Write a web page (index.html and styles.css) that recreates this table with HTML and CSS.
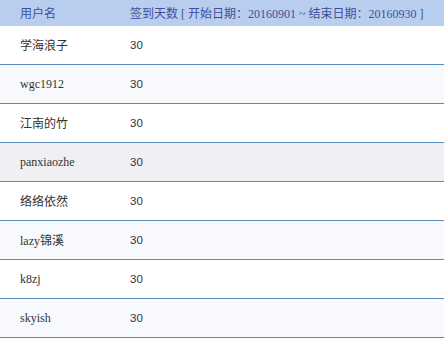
FILE: index.html
```html
<!DOCTYPE html>
<html lang="zh">
<head>
<meta charset="utf-8">
<link rel="stylesheet" href="styles.css">
</head>
<body>
<table class="sign">
  <thead>
    <tr><th class="c-name">用户名</th><th class="c-days">签到天数 [ 开始日期：20160901 ~ 结束日期：20160930 ]</th></tr>
  </thead>
  <tbody>
    <tr><td class="c-name">学海浪子</td><td class="c-days num">30</td></tr>
    <tr class="alt"><td class="c-name">wgc1912</td><td class="c-days num">30</td></tr>
    <tr><td class="c-name">江南的竹</td><td class="c-days num">30</td></tr>
    <tr class="hover"><td class="c-name">panxiaozhe</td><td class="c-days num">30</td></tr>
    <tr><td class="c-name">络络依然</td><td class="c-days num">30</td></tr>
    <tr class="alt"><td class="c-name">lazy锦溪</td><td class="c-days num">30</td></tr>
    <tr><td class="c-name">k8zj</td><td class="c-days num">30</td></tr>
    <tr class="alt"><td class="c-name">skyish</td><td class="c-days num">30</td></tr>
  </tbody>
</table>
</body>
</html>
```
FILE: styles.css
```css
html, body { margin: 0; padding: 0; background: #fff; }
body {
  font-family: "Liberation Serif", "Noto Sans CJK SC", serif;
  font-size: 12px;
  color: #333;
}
.sign {
  width: 100%;
  border-collapse: collapse;
}
.sign th {
  background: #b9cdee;
  color: #3d4f9c;
  font-weight: normal;
  text-align: left;
  height: 26px;
  padding: 0;
  vertical-align: middle;
}
.sign td {
  height: 38px;
  padding: 0;
  border-bottom: 1px solid #5a8ab6;
  vertical-align: middle;
}
.sign .c-name { width: 110px; padding-left: 20px; }
.sign .num { font-family: "Liberation Sans", sans-serif; font-size: 11.5px; }
.sign tr.alt td { background: #f8f9fc; }
.sign tr.hover td { background: #efeff4; }
```
